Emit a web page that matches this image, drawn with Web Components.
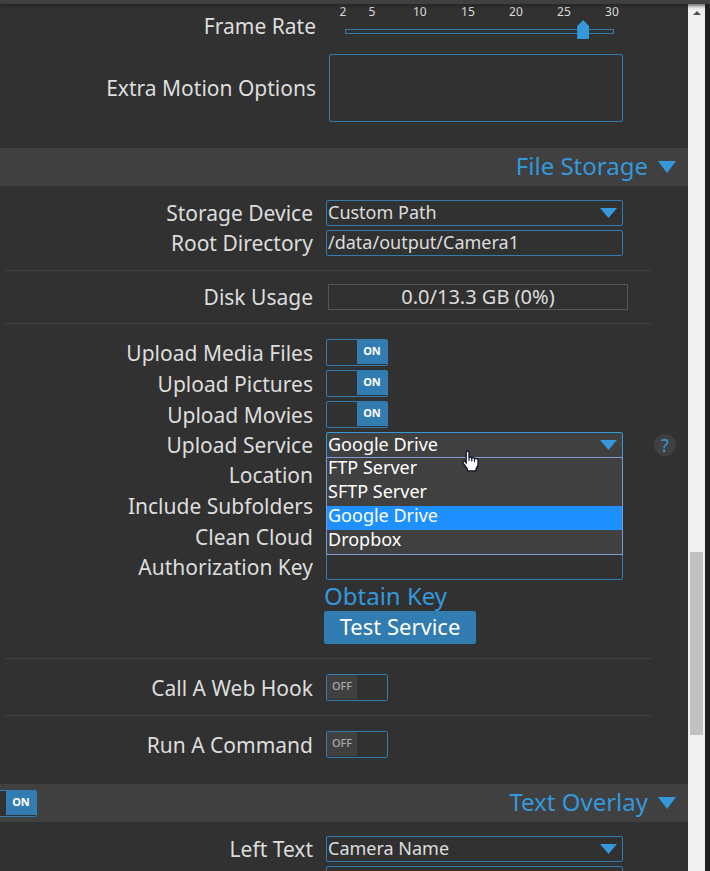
<!DOCTYPE html>
<html lang="en">
<head>
<meta charset="utf-8">
<title>Camera settings</title>
<style>
html,body{height:100%;margin:0}
body{background:#313131;color:#ddd;font-family:"Noto Sans","Open Sans",sans-serif;font-size:21px;overflow:hidden;
--line:#317cb0;--accent:#3498db;--bar:#404040;--bg:#313131}
</style>
</head>
<body>
<settings-page></settings-page>
<script>
const define=(name,html,setup)=>customElements.define(name,class extends HTMLElement{
  constructor(){
    super();
    const t=document.createElement('template');
    t.innerHTML=html;
    this.attachShadow({mode:'open'}).append(t.content.cloneNode(true));
  }
  connectedCallback(){if(setup)setup(this,this.shadowRoot)}
});
const label=(h,r,sel)=>r.querySelector(sel).setAttribute('aria-label',h.getAttribute('label')||'');

define('section-title',`<style>
:host{display:flex;align-items:center;height:38px;background:var(--bar);padding-right:12px}
h2{margin:0 0 0 auto;font-size:24px;line-height:36px;padding-bottom:2px;font-weight:400;color:var(--accent)}
svg{display:block;margin-left:10px}
</style><slot name="switch"></slot><h2><slot></slot></h2><svg width="18" height="12" viewBox="0 0 18 12" aria-hidden="true"><path d="M0 0H18L9 12Z" fill="#3498db"/></svg>`);

define('setting-row',`<style>
:host{display:grid;grid-template-columns:minmax(0,1fr) var(--field,297px) 65px;align-items:center}
:host([low]) .name{align-self:end}
.name{text-align:right;margin-right:13px;line-height:26px;white-space:nowrap}
.field{min-width:0;display:flex}
.field ::slotted(*){min-width:0}
.extra{padding-left:31px}
</style><span class="name"></span><div class="field"><slot></slot></div><div class="extra"><slot name="help"></slot></div>`,
(h,r)=>{r.querySelector('.name').textContent=h.getAttribute('label')||''});

define('text-field',`<style>
:host{display:block;width:100%}
input{display:block;box-sizing:border-box;width:100%;height:26px;border:1px solid var(--line);border-radius:2px;background:var(--bg);color:inherit;font:inherit;font-size:18px;padding:0 1px 2px;outline:0}
</style><input type="text">`,(h,r)=>{label(h,r,'input');r.querySelector('input').value=h.getAttribute('value')||''});

define('text-block',`<style>
:host{display:block;width:100%}
textarea{display:block;box-sizing:border-box;width:100%;height:68px;border:1px solid var(--line);border-radius:2px;background:transparent;color:inherit;font:inherit;resize:none}
</style><textarea></textarea>`,(h,r)=>label(h,r,'textarea'));

define('select-field',`<style>
:host{display:block;width:100%;position:relative}
select{appearance:none;display:block;box-sizing:border-box;width:100%;height:26px;border:1px solid var(--line);border-radius:2px;background:var(--bg);color:inherit;font:inherit;font-size:18px;line-height:22px;padding:0 28px 2px 1px;outline:0}
svg{position:absolute;right:6px;top:8px;pointer-events:none}
:host([open]) select{background:var(--bar);border-color:var(--accent);color:#fff}
ul{display:none}
:host([open]) ul{display:block;position:absolute;z-index:2;left:0;right:0;top:25px;margin:0;padding:0;list-style:none;background:var(--bar);border:1px solid #7b9bd4;color:#fff;font-size:18px}
li{padding:0 1px;height:24px;line-height:19px}
li[aria-selected=true]{background:#1e90ff}
</style><select></select><svg width="17" height="10" viewBox="0 0 17 10" aria-hidden="true"><path d="M0 0H17L8.5 10Z" fill="#3498db"/></svg><ul role="listbox"></ul>`,
(h,r)=>{
  label(h,r,'select');
  const s=r.querySelector('select'),u=r.querySelector('ul'),v=h.getAttribute('value');
  for(const t of h.getAttribute('options').split('|')){
    s.add(new Option(t,t,false,t===v));
    if(h.hasAttribute('open')){
      const li=document.createElement('li');
      li.setAttribute('role','option');li.setAttribute('aria-selected',t===v);li.textContent=t;u.append(li);
    }
  }
});

define('toggle-switch',`<style>
:host{display:block;flex:none}
label{display:block;position:relative;box-sizing:border-box;width:62px;height:27px;border:1px solid var(--line);border-radius:2px;background:var(--bg);padding-bottom:1px;font-size:11px}
input{position:absolute;inset:0;margin:0;width:100%;height:100%;opacity:0}
span{display:block;width:30px;height:24px;line-height:22px;text-align:center;background:#404040;color:#aaa;font-weight:500}
.on span{margin-left:30px;background:var(--line);color:#fff;font-weight:700}
</style><label><input type="checkbox"><span></span></label>`,
(h,r)=>{
  const on=h.hasAttribute('on');label(h,r,'input');
  r.querySelector('input').checked=on;r.querySelector('label').classList.toggle('on',on);
  if(!h.hasAttribute('plain'))r.querySelector('span').textContent=on?'ON':'OFF';
});

define('rate-slider',`<style>
:host{display:block;width:100%;padding:0 9px 0 16px;box-sizing:border-box}
.ticks{display:grid;grid-template-columns:3fr 5fr 5fr 5fr 5fr 5fr 0;font-size:12px;line-height:16px;margin:0 2px 0 -2px}
.ticks span{width:40px;margin-left:-20px;text-align:center}
.rail{position:relative;height:19px;display:flex;align-items:center}
.rail::before{content:"";position:absolute;left:0;right:0;top:9px;height:5px;box-sizing:border-box;border:1px solid var(--line)}
input{appearance:none;position:relative;flex:1;min-width:0;margin:0 -4px 0 -8px;height:19px;background:transparent}
input::-webkit-slider-thumb{appearance:none;width:12px;height:19px;background:var(--accent);clip-path:polygon(50% 0,100% 32%,100% 100%,0 100%,0 32%)}
</style><div class="ticks"><span>2</span><span>5</span><span>10</span><span>15</span><span>20</span><span>25</span><span>30</span></div><div class="rail"><input type="range" min="2" max="30" value="27" aria-label="Frame Rate"></div>`);

define('usage-meter',`<style>
:host{display:block;flex:none;box-sizing:border-box;width:300px;margin-left:2px;height:26px;line-height:24px;border:1px solid #555;text-align:center;font-size:20px}
</style><slot></slot>`);

define('rule-line',`<style>:host{display:block;height:1px;background:#404040;margin:14px 36px 15px 5px}</style>`);

define('help-badge',`<style>
button{display:block;width:22px;height:22px;border:0;border-radius:50%;padding:0;background:var(--bar);color:var(--accent);font:inherit;font-size:18px;line-height:20px;text-align:center}
</style><button type="button" aria-label="Help">?</button>`);

define('key-actions',`<style>
:host{display:grid;justify-items:start;margin-left:-2px}
a{color:var(--accent);text-decoration:none;font-size:24px;line-height:31px}
button{min-width:152px;height:33px;border:0;border-radius:2px;background:var(--line);color:#fff;font:inherit;font-size:22px;line-height:31px;padding:0 14px 2px}
</style><a href="#key">Obtain Key</a><button type="button">Test Service</button>`);

define('scroll-rail',`<style>
:host{display:flex;flex-direction:column;width:17px;background:#f0f0f0;box-sizing:border-box;padding:0 2px;flex:none}
.up{height:17px;display:grid;place-items:center}
.before{flex:531}.thumb{flex:183;background:#c1c1c1}.after{flex:136}
</style><div class="up"><svg width="8" height="4" viewBox="0 0 8 4"><path d="M0 4L4 0L8 4Z" fill="#505050"/></svg></div><div class="before"></div><div class="thumb"></div><div class="after"></div>`);

define('hand-pointer',`<style>:host{position:absolute;left:136px;top:18px;z-index:3;pointer-events:none}svg{display:block}</style>
<svg width="18" height="22" viewBox="0 0 18 22"><path d="M5.5 1C6.7 1 7 1.8 7 3V8C7.4 6.7 9.6 6.8 9.8 8.2C10.4 7.2 12.3 7.5 12.5 8.9C13.2 8.1 15.8 8.6 16 10V14.5C16 16.4 14.4 17.5 14 18.8V20.8H5.3V18.8L1.3 13.3C.4 11.7 1.6 10.5 3 11.5L4.2 12.8V3C4.2 1.8 4.5 1 5.5 1Z" fill="#fff" stroke="#111527" stroke-width="1.3"/><path d="M7 7.5V11M9.8 8V11.5M12.5 9V12" stroke="#111527" stroke-width="1.1"/></svg>`);

define('settings-page',`<style>
:host{display:flex;flex-direction:column;height:100vh;overflow:hidden}
.top{height:4px;flex:none;background:#404040;box-shadow:0 1px 4px #222;position:relative;z-index:1}
.view{flex:1;min-height:0;display:flex;background:#1e1e1e;padding-right:5px}
main{flex:1;min-width:0;overflow:hidden;background:var(--bg)}
.motion{--field:294px;display:grid;gap:15px;padding-bottom:26px}
.group{display:grid;gap:4px}
.files{padding:14px 0 26px}
.overlay{padding:14px 0}
.near-below{margin-bottom:13px}.near-above{margin-top:13px}
.flush{margin-top:-4px}
.cut{margin-left:-25px}
.pick{position:relative;width:100%}
</style>
<div class="top"></div>
<div class="view">
<main>
 <section class="motion">
  <setting-row low label="Frame Rate"><rate-slider></rate-slider></setting-row>
  <setting-row label="Extra Motion Options"><text-block label="Extra Motion Options"></text-block></setting-row>
 </section>
 <section-title>File Storage</section-title>
 <section class="files">
  <div class="group">
   <setting-row label="Storage Device"><select-field label="Storage Device" value="Custom Path" options="Custom Path"></select-field></setting-row>
   <setting-row label="Root Directory"><text-field label="Root Directory" value="/data/output/Camera1"></text-field></setting-row>
  </div>
  <rule-line class="near-below"></rule-line>
  <setting-row label="Disk Usage"><usage-meter>0.0/13.3 GB (0%)</usage-meter></setting-row>
  <rule-line class="near-above"></rule-line>
  <div class="group">
   <setting-row label="Upload Media Files"><toggle-switch on label="Upload Media Files"></toggle-switch></setting-row>
   <setting-row label="Upload Pictures"><toggle-switch on label="Upload Pictures"></toggle-switch></setting-row>
   <setting-row label="Upload Movies"><toggle-switch on label="Upload Movies"></toggle-switch></setting-row>
   <setting-row label="Upload Service"><div class="pick"><select-field open label="Upload Service" value="Google Drive" options="FTP Server|SFTP Server|Google Drive|Dropbox"></select-field><hand-pointer></hand-pointer></div><help-badge slot="help"></help-badge></setting-row>
   <setting-row label="Location"><text-field label="Location"></text-field></setting-row>
   <setting-row label="Include Subfolders"><toggle-switch on plain label="Include Subfolders"></toggle-switch></setting-row>
   <setting-row label="Clean Cloud"><toggle-switch on plain label="Clean Cloud"></toggle-switch></setting-row>
   <setting-row label="Authorization Key"><text-field label="Authorization Key"></text-field></setting-row>
   <setting-row class="flush"><key-actions></key-actions></setting-row>
  </div>
  <rule-line></rule-line>
  <setting-row label="Call A Web Hook"><toggle-switch label="Call A Web Hook"></toggle-switch></setting-row>
  <rule-line></rule-line>
  <setting-row label="Run A Command"><toggle-switch label="Run A Command"></toggle-switch></setting-row>
 </section>
 <section-title><toggle-switch slot="switch" class="cut" on label="Text Overlay"></toggle-switch>Text Overlay</section-title>
 <section class="overlay group">
  <setting-row label="Left Text"><select-field label="Left Text" value="Camera Name" options="Camera Name"></select-field></setting-row>
  <setting-row><text-field label="Right Text"></text-field></setting-row>
 </section>
</main>
<scroll-rail></scroll-rail>
</div>`);
</script>
</body>
</html>
